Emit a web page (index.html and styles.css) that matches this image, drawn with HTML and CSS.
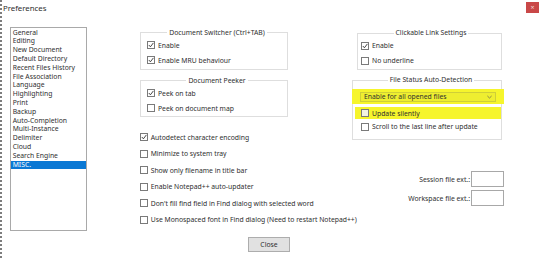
FILE: index.html
```html
<!DOCTYPE html>
<html>
<head>
  <meta charset="UTF-8">
  <title>Preferences</title>
  <link rel="stylesheet" href="styles.css">
</head>
<body>
  <div class="window">
    <div class="titlebar">
      <span class="title">Preferences</span>
      <span class="close-x">&times;</span>
    </div>

    <div class="content">
      <!-- Page list -->
      <ul class="page-list">
        <li>General</li>
        <li>Editing</li>
        <li>New Document</li>
        <li>Default Directory</li>
        <li>Recent Files History</li>
        <li>File Association</li>
        <li>Language</li>
        <li>Highlighting</li>
        <li>Print</li>
        <li>Backup</li>
        <li>Auto-Completion</li>
        <li>Multi-Instance</li>
        <li>Delimiter</li>
        <li>Cloud</li>
        <li>Search Engine</li>
        <li class="selected">MISC.</li>
      </ul>

      <div class="panel">
        <!-- Left column -->
        <div class="col">
          <fieldset class="group switcher">
            <legend>Document Switcher (Ctrl+TAB)</legend>
            <label class="check"><span class="box"><svg viewBox="0 0 6 6"><polyline points="0.8,3 2.4,4.8 5.4,0.9"/></svg></span>Enable</label>
            <label class="check"><span class="box"><svg viewBox="0 0 6 6"><polyline points="0.8,3 2.4,4.8 5.4,0.9"/></svg></span>Enable MRU behaviour</label>
          </fieldset>

          <fieldset class="group peeker">
            <legend>Document Peeker</legend>
            <label class="check"><span class="box"><svg viewBox="0 0 6 6"><polyline points="0.8,3 2.4,4.8 5.4,0.9"/></svg></span>Peek on tab</label>
            <label class="check"><span class="box"></span>Peek on document map</label>
          </fieldset>

          <div class="options">
            <label class="check"><span class="box"><svg viewBox="0 0 6 6"><polyline points="0.8,3 2.4,4.8 5.4,0.9"/></svg></span>Autodetect character encoding</label>
            <label class="check"><span class="box"></span>Minimize to system tray</label>
            <label class="check"><span class="box"></span>Show only filename in title bar</label>
            <label class="check"><span class="box"></span>Enable Notepad++ auto-updater</label>
            <label class="check"><span class="box"></span>Don't fill find field in Find dialog with selected word</label>
            <label class="check"><span class="box"></span>Use Monospaced font in Find dialog (Need to restart Notepad++)</label>
          </div>
        </div>

        <!-- Right column -->
        <div class="col">
          <fieldset class="group links">
            <legend>Clickable Link Settings</legend>
            <label class="check"><span class="box"><svg viewBox="0 0 6 6"><polyline points="0.8,3 2.4,4.8 5.4,0.9"/></svg></span>Enable</label>
            <label class="check"><span class="box"></span>No underline</label>
          </fieldset>

          <fieldset class="group autodetect">
            <legend>File Status Auto-Detection</legend>
            <div class="highlight select-wrap">
              <div class="select">
                <span>Enable for all opened files</span>
                <svg viewBox="0 0 6 4"><polyline points="0.5,0.8 3,3.2 5.5,0.8"/></svg>
              </div>
            </div>
            <label class="check highlight silent"><span class="box"></span>Update silently</label>
            <label class="check"><span class="box"></span>Scroll to the last line after update</label>
          </fieldset>

          <div class="ext-row session">
            <span>Session file ext.:</span>
            <input type="text">
          </div>
          <div class="ext-row">
            <span>Workspace file ext.:</span>
            <input type="text">
          </div>
        </div>
      </div>
    </div>

    <div class="footer">
      <button>Close</button>
    </div>
  </div>
</body>
</html>
```

FILE: styles.css
```css
body {
  margin: 0;
  font-family: "Noto Sans", "Open Sans", sans-serif;
  font-size: 6.8px;
  color: #2e2e2e;
  background: #fff;
}
.window {
  width: 540px;
  height: 258px;
  box-sizing: border-box;
  border-left: 2px dotted #7d7d7d;
  background: #fff;
}
.titlebar {
  display: flex;
  justify-content: space-between;
  height: 17px;
}
.title {
  padding: 3px 0 0 1px;
  font-size: 7.8px;
  line-height: 10px;
}
.close-x {
  width: 13px;
  height: 11px;
  margin: 2px 1px 0 0;
  background: #c94848;
  color: #f4d6d6;
  font-size: 7px;
  line-height: 11px;
  text-align: center;
}
.content {
  display: flex;
  align-items: flex-start;
  padding-left: 8px;
  margin-top: 10px;
}
.page-list {
  list-style: none;
  margin: 0;
  padding: 0.7px 0 0;
  width: 77px;
  height: 204px;
  box-sizing: border-box;
  border: 1px solid #a9a9a9;
}
.page-list li {
  height: 8.8px;
  line-height: 8.8px;
  padding-left: 1.7px;
  white-space: nowrap;
}
.page-list li.selected {
  background: #0a78d4;
  color: #fff;
}
.panel {
  display: grid;
  grid-template-columns: 148px 152px;
  column-gap: 64px;
  margin-left: 53px;
}
.col {
  display: flex;
  flex-direction: column;
}
.group {
  margin: 0;
  padding: 0 0 1px 6px;
  min-width: 0;
  border: 1px solid #dedede;
}
.group legend {
  margin: 0 auto;
  padding: 0 2px;
  line-height: 10px;
}
.check {
  display: flex;
  align-items: center;
  height: 15px;
  white-space: nowrap;
}
.box {
  display: flex;
  align-items: center;
  justify-content: center;
  width: 8px;
  height: 8px;
  box-sizing: border-box;
  border: 1px solid #7a7a7a;
  background: #fff;
  margin-right: 3px;
  flex-shrink: 0;
}
.box svg {
  width: 6px;
  height: 6px;
  fill: none;
  stroke: #333;
  stroke-width: 0.9;
}
.switcher {
  margin-top: 0.5px;
}
.peeker {
  margin-top: 6px;
  padding-bottom: 0;
}
.options {
  margin-top: 12.5px;
}
.options .check {
  height: 16.5px;
}
.options .box {
  margin-right: 2.7px;
}
.links {
  margin: 1px 2px 0 5px;
  padding-left: 3px;
}
.autodetect {
  margin: 5px 2px 0 0;
  padding: 0 0 5px 8px;
}
.highlight {
  background: #f6f52c;
}
.select-wrap {
  margin: 4px -3px 0 -9px;
  padding: 2.5px 8px;
}
.select {
  display: flex;
  align-items: center;
  justify-content: space-between;
  height: 10px;
  box-sizing: border-box;
  padding: 0 3px 0 3px;
  border: 1px solid #cfcf38;
  background: #eeee30;
}
.select svg {
  width: 5px;
  height: 4px;
  fill: none;
  stroke: #555;
  stroke-width: 0.8;
}
.silent {
  align-self: flex-start;
  margin: 3px 0 0 -6px;
  padding: 0 2px 0 6px;
  height: 12px;
}
.silent .box {
  background: #f3f3e0;
}
.ext-row {
  display: flex;
  justify-content: flex-end;
  align-items: center;
  gap: 1px;
  margin-top: 3px;
}
.ext-row.session {
  margin-top: 31px;
}
.ext-row input {
  width: 33px;
  height: 16px;
  box-sizing: border-box;
  margin: 0;
  border: 1px solid #a8a8a8;
  padding: 0;
}
.footer {
  display: flex;
  justify-content: center;
  margin-top: 6px;
  padding-right: 4px;
}
.footer button {
  width: 42px;
  height: 15px;
  padding: 0;
  border: 1px solid #adadad;
  background: #e1e1e1;
  font-family: inherit;
  font-size: 6.8px;
  color: #2e2e2e;
}
```
